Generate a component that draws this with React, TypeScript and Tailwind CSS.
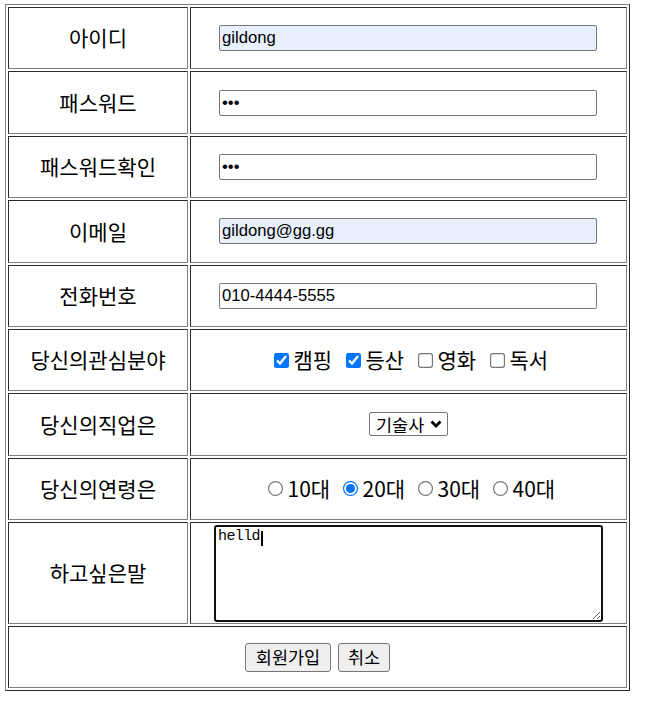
import React from "react";

const labelCell =
  "w-[180px] p-[1px] text-center align-middle text-[21px] text-black border border-t-[#2b2b2b] border-l-[#2b2b2b] border-r-[#808080] border-b-[#808080]";
const valueCell =
  "p-[1px] text-center align-middle text-[21px] text-black border border-t-[#2b2b2b] border-l-[#2b2b2b] border-r-[#808080] border-b-[#808080]";

const inputCls =
  "block w-[378px] h-[26px] border border-[#767676] rounded-[2px] pl-[2px] text-[16.67px] text-black [font-family:'Liberation_Sans',Arial,sans-serif] outline-none";

function Row({ label, children, h = "h-[62.375px]" }: { label: string; children: React.ReactNode; h?: string }) {
  return (
    <tr>
      <td className={`${labelCell} ${h}`}>{label}</td>
      <td className={`${valueCell} ${h}`}>{children}</td>
    </tr>
  );
}

export default function App() {
  const interests = [
    { t: "캠핑", c: true },
    { t: "등산", c: true },
    { t: "영화", c: false },
    { t: "독서", c: false },
  ];
  const ages = [
    { t: "10대", c: false },
    { t: "20대", c: true },
    { t: "30대", c: false },
    { t: "40대", c: false },
  ];
  return (
    <div className="w-[647px] h-[713px] bg-white pt-[4px] pl-[5px] [font-family:'Noto_Sans_CJK_KR','Noto_Sans',sans-serif]">
      <table className="w-[625px] border-separate border-spacing-[2px] border border-t-[#808080] border-l-[#808080] border-r-[#2b2b2b] border-b-[#2b2b2b]">
        <tbody>
          <Row label="아이디">
            <div className="flex justify-center items-center pr-[1px]">
              <input type="text" defaultValue="gildong" className={`${inputCls} bg-[#e8f0fe]`} />
            </div>
          </Row>
          <Row label="패스워드">
            <div className="flex justify-center items-center pr-[1px]">
              <input type="password" defaultValue="abc" className={`${inputCls} bg-white`} />
            </div>
          </Row>
          <Row label="패스워드확인">
            <div className="flex justify-center items-center pr-[1px]">
              <input type="password" defaultValue="abc" className={`${inputCls} bg-white`} />
            </div>
          </Row>
          <Row label="이메일">
            <div className="flex justify-center items-center pr-[1px]">
              <input type="text" defaultValue="gildong@gg.gg" className={`${inputCls} bg-[#e8f0fe]`} />
            </div>
          </Row>
          <Row label="전화번호">
            <div className="flex justify-center items-center pr-[1px]">
              <input type="text" defaultValue="010-4444-5555" className={`${inputCls} bg-white`} />
            </div>
          </Row>
          <Row label="당신의관심분야">
            <div className="flex items-center justify-center pl-[6px]">
              {interests.map((it, i) => (
                <label key={it.t} className={`flex items-center ${i > 0 ? "ml-[12px]" : ""}`}>
                  <span className="flex w-[15px] h-[15px] items-center justify-center">
                    <input type="checkbox" defaultChecked={it.c} className="w-[13px] h-[13px] m-0 scale-[1.154]" />
                  </span>
                  <span className="ml-[5px] w-[40px] text-left whitespace-nowrap">{it.t}</span>
                </label>
              ))}
            </div>
          </Row>
          <Row label="당신의직업은">
            <div className="flex items-center justify-center">
              <div className="relative">
                <select
                  defaultValue="기술사"
                  className="block appearance-none w-[79px] h-[24px] border border-[#767676] rounded-[2px] bg-white pl-[6px] text-[17.5px] leading-none text-black outline-none"
                >
                  <option>기술사</option>
                  <option>회사원</option>
                  <option>학생</option>
                </select>
                <svg
                  className="pointer-events-none absolute left-[61px] top-[8px]"
                  width="12"
                  height="8"
                  viewBox="0 0 12 8"
                >
                  <path d="M1.5 1.5 L6 6 L10.5 1.5" fill="none" stroke="#000" strokeWidth="2.8" />
                </svg>
              </div>
            </div>
          </Row>
          <Row label="당신의연령은">
            <div className="flex items-center justify-center pl-[5px]">
              {ages.map((it, i) => (
                <label key={it.t} className={`flex items-center ${i > 0 ? "ml-[13px]" : ""}`}>
                  <span className="flex w-[15px] h-[15px] items-center justify-center">
                    <input type="radio" name="age" defaultChecked={it.c} className="w-[13px] h-[13px] m-0 scale-[1.154]" />
                  </span>
                  <span className="ml-[5px] w-[42px] text-left whitespace-nowrap">{it.t}</span>
                </label>
              ))}
            </div>
          </Row>
          <Row label="하고싶은말" h="h-[102px]">
            <div className="relative w-[389px] mx-auto">
              <textarea
                defaultValue="helld"
                className="block w-[389px] h-[97px] border-2 border-[#101010] rounded-[3px] pl-[2px] pt-[1px] text-[15px] leading-[18px] tracking-[-0.6px] text-black [font-family:'Liberation_Mono',monospace] outline-none"
              />
              <span className="pointer-events-none absolute left-[47px] top-[6px] w-[2px] h-[15px] bg-black" />
            </div>
          </Row>
          <tr>
            <td
              colSpan={2}
              className="h-[62px] p-[1px] text-center align-middle border border-t-[#2b2b2b] border-l-[#2b2b2b] border-r-[#808080] border-b-[#808080]"
            >
              <div className="flex items-center justify-center gap-[7px]">
                <button className="w-[86px] h-[29px] border border-[#767676] rounded-[3px] bg-[#efefef] text-[17.5px] text-black">
                  회원가입
                </button>
                <button className="w-[52px] h-[29px] border border-[#767676] rounded-[3px] bg-[#efefef] text-[17.5px] text-black">
                  취소
                </button>
              </div>
            </td>
          </tr>
        </tbody>
      </table>
    </div>
  );
}
